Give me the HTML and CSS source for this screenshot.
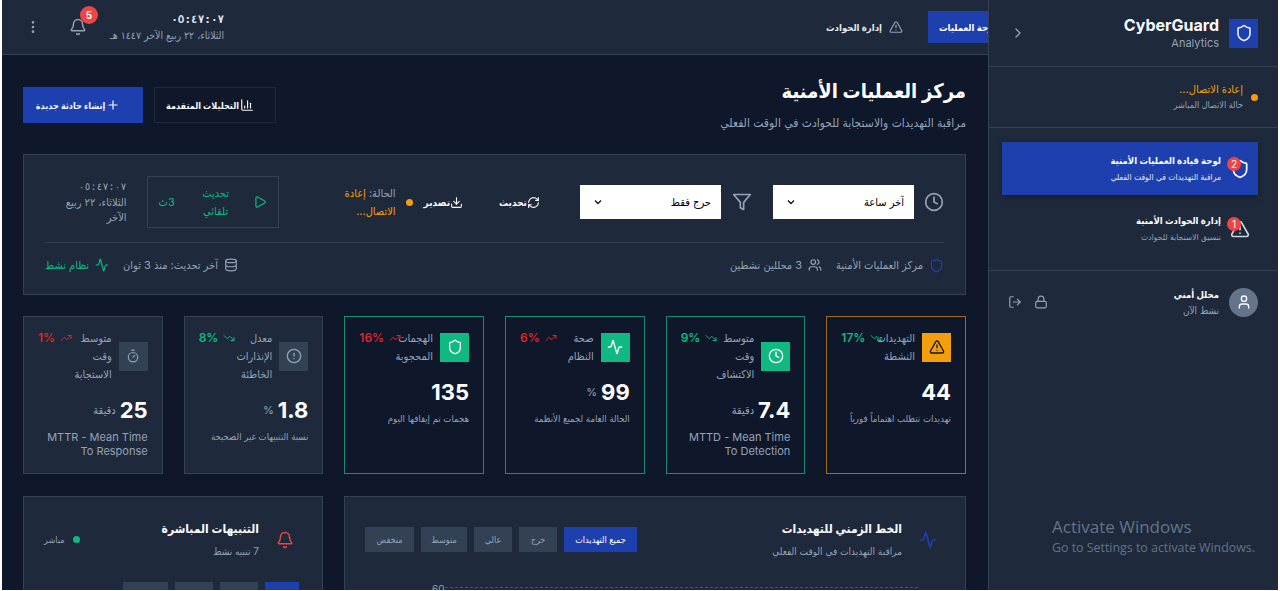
FILE: index.html
```html
<!DOCTYPE html>
<html lang="ar" dir="rtl">
<head>
    <meta charset="UTF-8">
    <meta name="viewport" content="width=device-width, initial-scale=1.0">
    <title>CyberGuard Analytics</title>
    <link rel="stylesheet" href="styles.css">
</head>
<body>
    <div id="app">
        <aside id="sidebar">
            <div class="side-head">
                <div class="logo">
                    <svg class="ico" width="18" height="18" viewBox="0 0 24 24"><path d="M20 13c0 5-3.500 7.500-7.660 8.950a1 1 0 0 1-.67-.01C7.500 20.500 4 18 4 13V6a1 1 0 0 1 1-1c2 0 4.500-1.200 6.240-2.720a1.170 1.170 0 0 1 1.520 0C14.510 3.810 17 5 19 5a1 1 0 0 1 1 1z"/></svg>
                </div>
                <div class="brand">
                    <div class="brand-name">CyberGuard</div>
                    <div class="brand-sub">Analytics</div>
                </div>
                <svg class="ico chevron" width="16" height="16" viewBox="0 0 24 24"><path d="m9 18 6-6-6-6"/></svg>
            </div>

            <div class="side-status">
                <span class="dot dot-orange"></span>
                <div>
                    <div class="status-main">إعادة الاتصال...</div>
                    <div class="status-sub">حالة الاتصال المباشر</div>
                </div>
            </div>

            <nav class="side-nav">
                <a class="side-item active">
                    <span class="side-icon">
                        <svg class="ico" width="20" height="20" viewBox="0 0 24 24"><path d="M20 13c0 5-3.500 7.500-7.660 8.950a1 1 0 0 1-.67-.01C7.500 20.500 4 18 4 13V6a1 1 0 0 1 1-1c2 0 4.500-1.200 6.240-2.720a1.170 1.170 0 0 1 1.520 0C14.510 3.810 17 5 19 5a1 1 0 0 1 1 1z"/></svg>
                        <span class="side-badge">2</span>
                    </span>
                    <span>
                        <span class="side-title">لوحة قيادة العمليات الأمنية</span>
                        <span class="side-desc">مراقبة التهديدات في الوقت الفعلي</span>
                    </span>
                </a>
                <a class="side-item">
                    <span class="side-icon">
                        <svg class="ico" width="20" height="20" viewBox="0 0 24 24"><path d="m21.730 18-8-14a2 2 0 0 0-3.480 0l-8 14A2 2 0 0 0 4 21h16a2 2 0 0 0 1.730-3"/><path d="M12 9v4"/><path d="M12 17h.01"/></svg>
                        <span class="side-badge">1</span>
                    </span>
                    <span>
                        <span class="side-title">إدارة الحوادث الأمنية</span>
                        <span class="side-desc">تنسيق الاستجابة للحوادث</span>
                    </span>
                </a>
            </nav>

            <div class="side-user">
                <div class="avatar">
                    <svg class="ico" width="16" height="16" viewBox="0 0 24 24"><path d="M19 21v-2a4 4 0 0 0-4-4H9a4 4 0 0 0-4 4v2"/><circle cx="12" cy="7" r="4"/></svg>
                </div>
                <div class="user-text">
                    <div class="user-name">محلل أمني</div>
                    <div class="user-state">نشط الآن</div>
                </div>
                <svg class="ico user-act" width="14" height="14" viewBox="0 0 24 24"><rect x="3" y="11" width="18" height="11" rx="2"/><path d="M7 11V7a5 5 0 0 1 10 0v4"/></svg>
                <svg class="ico user-act" width="14" height="14" viewBox="0 0 24 24"><path d="M9 21H5a2 2 0 0 1-2-2V5a2 2 0 0 1 2-2h4"/><path d="m16 17 5-5-5-5"/><path d="M21 12H9"/></svg>
            </div>

            <div class="watermark" dir="ltr">
                <div class="wm-title">Activate Windows</div>
                <div class="wm-sub">Go to Settings to activate Windows.</div>
            </div>
        </aside>

        <div id="main">
            <header class="topbar">
                <nav class="top-nav">
                    <a class="top-link active">لوحة العمليات</a>
                    <a class="top-link">
                        <svg class="ico" width="14" height="14" viewBox="0 0 24 24"><path d="m21.730 18-8-14a2 2 0 0 0-3.480 0l-8 14A2 2 0 0 0 4 21h16a2 2 0 0 0 1.730-3"/><path d="M12 9v4"/><path d="M12 17h.01"/></svg>
                        إدارة الحوادث
                    </a>
                </nav>
                <div class="top-tools">
                    <div class="top-clock">
                        <div class="clock-time">٠٥:٤٧:٠٧</div>
                        <div class="clock-date">الثلاثاء، ٢٢ ربيع الآخر ١٤٤٧ هـ</div>
                    </div>
                    <div class="bell">
                        <svg class="ico" width="18" height="18" viewBox="0 0 24 24"><path d="M10.268 21a2 2 0 0 0 3.464 0"/><path d="M3.262 15.326A1 1 0 0 0 4 17h16a1 1 0 0 0 .74-1.673C19.410 13.956 18 12.499 18 8A6 6 0 0 0 6 8c0 4.499-1.411 5.956-2.738 7.326"/></svg>
                        <span class="bell-badge">5</span>
                    </div>
                    <svg class="ico dots" width="16" height="16" viewBox="0 0 24 24"><circle cx="12" cy="12" r="1"/><circle cx="12" cy="5" r="1"/><circle cx="12" cy="19" r="1"/></svg>
                </div>
            </header>

            <div class="content">
                <div class="page-head">
                    <div>
                        <h1>مركز العمليات الأمنية</h1>
                        <p>مراقبة التهديدات والاستجابة للحوادث في الوقت الفعلي</p>
                    </div>
                    <div class="page-actions">
                        <button class="btn btn-ghost">
                            <svg class="ico" width="14" height="14" viewBox="0 0 24 24"><path d="M3 3v16a2 2 0 0 0 2 2h16"/><path d="M18 17V9"/><path d="M13 17V5"/><path d="M8 17v-3"/></svg>التحليلات المتقدمة
                        </button>
                        <button class="btn btn-primary">
                            <svg class="ico" width="14" height="14" viewBox="0 0 24 24"><path d="M5 12h14"/><path d="M12 5v14"/></svg>إنشاء حادثة جديدة
                        </button>
                    </div>
                </div>

                <section class="controls">
                    <div class="ctrl-row">
                        <svg class="ico ctrl-ico" width="20" height="20" viewBox="0 0 24 24"><circle cx="12" cy="12" r="10"/><path d="M12 6v6l4 2"/></svg>
                        <select class="ctrl-select"><option>آخر ساعة</option></select>
                        <svg class="ico ctrl-ico funnel" width="20" height="20" viewBox="0 0 24 24"><path d="M22 3H2l8 9.460V19l4 2v-8.540z"/></svg>
                        <select class="ctrl-select"><option>حرج فقط</option></select>
                        <button class="ctrl-btn refresh">
                            <svg class="ico" width="13" height="13" viewBox="0 0 24 24"><path d="M3 12a9 9 0 0 1 9-9 9.750 9.750 0 0 1 6.740 2.740L21 8"/><path d="M21 3v5h-5"/><path d="M21 12a9 9 0 0 1-9 9 9.750 9.750 0 0 1-6.740-2.740L3 16"/><path d="M8 16H3v5"/></svg>تحديث
                        </button>
                        <button class="ctrl-btn export">
                            <svg class="ico" width="13" height="13" viewBox="0 0 24 24"><path d="M21 15v4a2 2 0 0 1-2 2H5a2 2 0 0 1-2-2v-4"/><path d="m7 10 5 5 5-5"/><path d="M12 15V3"/></svg>تصدير
                        </button>
                        <span class="dot dot-orange ctrl-dot"></span>
                        <div class="ctrl-state"><span>الحالة:</span> إعادة الاتصال...</div>
                        <div class="auto-box">
                            <svg class="ico" width="14" height="14" viewBox="0 0 24 24"><path d="M5 5a2 2 0 0 1 3.008-1.728l11.997 6.998a2 2 0 0 1 .003 3.458l-12 7A2 2 0 0 1 5 19z"/></svg>
                            <span class="auto-label">تحديث تلقائي</span>
                            <span class="auto-count">3ث</span>
                        </div>
                        <div class="ctrl-clock">
                            <div class="clock-time">٠٥:٤٧:٠٧</div>
                            <div class="clock-date">الثلاثاء، ٢٢ ربيع الآخر</div>
                        </div>
                    </div>
                    <div class="ctrl-foot">
                        <div class="foot-group">
                            <svg class="ico foot-shield" width="15" height="15" viewBox="0 0 24 24"><path d="M20 13c0 5-3.500 7.500-7.660 8.950a1 1 0 0 1-.67-.01C7.500 20.500 4 18 4 13V6a1 1 0 0 1 1-1c2 0 4.500-1.200 6.240-2.720a1.170 1.170 0 0 1 1.520 0C14.510 3.810 17 5 19 5a1 1 0 0 1 1 1z"/></svg>
                            <span>مركز العمليات الأمنية</span>
                            <svg class="ico foot-gap" width="14" height="14" viewBox="0 0 24 24"><path d="M16 21v-2a4 4 0 0 0-4-4H6a4 4 0 0 0-4 4v2"/><circle cx="9" cy="7" r="4"/><path d="M22 21v-2a4 4 0 0 0-3-3.870"/><path d="M16 3.130a4 4 0 0 1 0 7.750"/></svg>
                            <span>3 محللين نشطين</span>
                        </div>
                        <div class="foot-group">
                            <svg class="ico" width="14" height="14" viewBox="0 0 24 24"><ellipse cx="12" cy="5" rx="9" ry="3"/><path d="M3 5v14a9 3 0 0 0 18 0V5"/><path d="M3 12a9 3 0 0 0 18 0"/></svg>
                            <span>آخر تحديث: منذ 3 ثوان</span>
                            <svg class="ico foot-gap green" width="14" height="14" viewBox="0 0 24 24"><path d="M22 12h-2.480a2 2 0 0 0-1.930 1.460l-2.350 8.360a.25.25 0 0 1-.48 0L9.240 2.180a.25.25 0 0 0-.48 0l-2.350 8.360A2 2 0 0 1 4.490 12H2"/></svg>
                            <span class="green">نظام نشط</span>
                        </div>
                    </div>
                </section>

                <section class="kpis">
                    <div class="kpi kpi-orange">
                        <div class="kpi-head">
                            <span class="kpi-ico bg-orange"><svg class="ico" width="16" height="16" viewBox="0 0 24 24"><path d="m21.730 18-8-14a2 2 0 0 0-3.480 0l-8 14A2 2 0 0 0 4 21h16a2 2 0 0 0 1.730-3"/><path d="M12 9v4"/><path d="M12 17h.01"/></svg></span>
                            <span class="kpi-title">التهديدات<br>النشطة</span>
                            <span class="trend down"><svg class="ico" width="12" height="12" viewBox="0 0 24 24"><path d="M22 17 13.500 8.500l-5 5L2 7"/><path d="M16 17h6v-6"/></svg>17%</span>
                        </div>
                        <div class="kpi-val"><b>44</b></div>
                        <div class="kpi-desc">تهديدات تتطلب اهتماماً فورياً</div>
                    </div>
                    <div class="kpi kpi-green">
                        <div class="kpi-head">
                            <span class="kpi-ico bg-green"><svg class="ico" width="16" height="16" viewBox="0 0 24 24"><circle cx="12" cy="12" r="10"/><path d="M12 6v6l4 2"/></svg></span>
                            <span class="kpi-title">متوسط<br>وقت<br>الاكتشاف</span>
                            <span class="trend down"><svg class="ico" width="12" height="12" viewBox="0 0 24 24"><path d="M22 17 13.500 8.500l-5 5L2 7"/><path d="M16 17h6v-6"/></svg>9%</span>
                        </div>
                        <div class="kpi-val"><b>7.4</b><span>دقيقة</span></div>
                        <div class="kpi-note">MTTD - Mean Time To Detection</div>
                    </div>
                    <div class="kpi kpi-green">
                        <div class="kpi-head">
                            <span class="kpi-ico bg-green"><svg class="ico" width="16" height="16" viewBox="0 0 24 24"><path d="M22 12h-2.480a2 2 0 0 0-1.930 1.460l-2.350 8.360a.25.25 0 0 1-.48 0L9.240 2.180a.25.25 0 0 0-.48 0l-2.350 8.360A2 2 0 0 1 4.490 12H2"/></svg></span>
                            <span class="kpi-title">صحة<br>النظام</span>
                            <span class="trend up"><svg class="ico" width="12" height="12" viewBox="0 0 24 24"><path d="M22 7 13.500 15.500l-5-5L2 17"/><path d="M16 7h6v6"/></svg>6%</span>
                        </div>
                        <div class="kpi-val"><b>99</b><span>%</span></div>
                        <div class="kpi-desc">الحالة العامة لجميع الأنظمة</div>
                    </div>
                    <div class="kpi kpi-green">
                        <div class="kpi-head">
                            <span class="kpi-ico bg-green"><svg class="ico" width="16" height="16" viewBox="0 0 24 24"><path d="M20 13c0 5-3.500 7.500-7.660 8.950a1 1 0 0 1-.67-.01C7.500 20.500 4 18 4 13V6a1 1 0 0 1 1-1c2 0 4.500-1.200 6.240-2.720a1.170 1.170 0 0 1 1.520 0C14.510 3.810 17 5 19 5a1 1 0 0 1 1 1z"/></svg></span>
                            <span class="kpi-title">الهجمات<br>المحجوبة</span>
                            <span class="trend up"><svg class="ico" width="12" height="12" viewBox="0 0 24 24"><path d="M22 7 13.500 15.500l-5-5L2 17"/><path d="M16 7h6v6"/></svg>16%</span>
                        </div>
                        <div class="kpi-val"><b>135</b></div>
                        <div class="kpi-desc">هجمات تم إيقافها اليوم</div>
                    </div>
                    <div class="kpi kpi-plain">
                        <div class="kpi-head">
                            <span class="kpi-ico bg-slate"><svg class="ico" width="16" height="16" viewBox="0 0 24 24"><circle cx="12" cy="12" r="10"/><path d="M12 8v4"/><path d="M12 16h.01"/></svg></span>
                            <span class="kpi-title">معدل<br>الإنذارات<br>الخاطئة</span>
                            <span class="trend down"><svg class="ico" width="12" height="12" viewBox="0 0 24 24"><path d="M22 17 13.500 8.500l-5 5L2 7"/><path d="M16 17h6v-6"/></svg>8%</span>
                        </div>
                        <div class="kpi-val"><b>1.8</b><span>%</span></div>
                        <div class="kpi-desc">نسبة التنبيهات غير الصحيحة</div>
                    </div>
                    <div class="kpi kpi-plain">
                        <div class="kpi-head">
                            <span class="kpi-ico bg-slate"><svg class="ico" width="14" height="14" viewBox="0 0 24 24"><path d="M10 2h4"/><path d="M12 14l3-3"/><circle cx="12" cy="14" r="8"/></svg></span>
                            <span class="kpi-title">متوسط<br>وقت<br>الاستجابة</span>
                            <span class="trend up"><svg class="ico" width="12" height="12" viewBox="0 0 24 24"><path d="M22 7 13.500 15.500l-5-5L2 17"/><path d="M16 7h6v6"/></svg>1%</span>
                        </div>
                        <div class="kpi-val"><b>25</b><span>دقيقة</span></div>
                        <div class="kpi-note">MTTR - Mean Time To Response</div>
                    </div>
                </section>

                <section class="panels">
                    <div class="panel panel-wide">
                        <div class="panel-head">
                            <svg class="ico panel-ico blue" width="18" height="18" viewBox="0 0 24 24"><path d="M22 12h-2.480a2 2 0 0 0-1.930 1.460l-2.350 8.360a.25.25 0 0 1-.48 0L9.240 2.180a.25.25 0 0 0-.48 0l-2.350 8.360A2 2 0 0 1 4.490 12H2"/></svg>
                            <div class="panel-text">
                                <h2>الخط الزمني للتهديدات</h2>
                                <p>مراقبة التهديدات في الوقت الفعلي</p>
                            </div>
                            <div class="chips">
                                <span class="chip on">جميع التهديدات</span>
                                <span class="chip w38">حرج</span>
                                <span class="chip w38">عالي</span>
                                <span class="chip w45">متوسط</span>
                                <span class="chip w49">منخفض</span>
                            </div>
                        </div>
                        <div class="chart-line"><em>60</em></div>
                    </div>
                    <div class="panel">
                        <div class="panel-head">
                            <svg class="ico panel-ico red" width="18" height="18" viewBox="0 0 24 24"><path d="M10.268 21a2 2 0 0 0 3.464 0"/><path d="M3.262 15.326A1 1 0 0 0 4 17h16a1 1 0 0 0 .74-1.673C19.410 13.956 18 12.499 18 8A6 6 0 0 0 6 8c0 4.499-1.411 5.956-2.738 7.326"/></svg>
                            <div class="panel-text">
                                <h2>التنبيهات المباشرة</h2>
                                <p>7 تنبيه نشط</p>
                            </div>
                            <div class="live"><span class="dot dot-green"></span>مباشر</div>
                        </div>
                        <div class="alert-tabs">
                            <span class="tab on"></span>
                            <span class="tab t38"></span>
                            <span class="tab t38"></span>
                            <span class="tab t45"></span>
                        </div>
                    </div>
                </section>
            </div>
        </div>
    </div>
</body>
</html>
```

FILE: styles.css
```css
* {
    box-sizing: border-box;
}

html, body {
    height: 100%;
}

body {
    margin: 0;
    padding: 0 2px 1px 2px;
    background-color: #fff;
    font-family: Inter, "DejaVu Sans Condensed", "DejaVu Sans", sans-serif;
    color: #f8fafc;
    overflow: hidden;
}

h1, h2, p {
    margin: 0;
}

.ico {
    fill: none;
    stroke: currentColor;
    stroke-width: 2;
    stroke-linecap: round;
    stroke-linejoin: round;
    flex: none;
}

.dot {
    display: inline-block;
    width: 7px;
    height: 7px;
    border-radius: 50%;
    flex: none;
}

.dot-orange { background-color: #f59e0b; }
.dot-green { background-color: #10b981; }
.green { color: #10b981; }
.blue { color: #1e40af; }
.red { color: #ef4444; }

#app {
    display: flex;
    height: 100%;
    overflow: hidden;
}

/* sidebar */
#sidebar {
    width: 290px;
    flex: none;
    position: relative;
    z-index: 5;
    background-color: #1e293b;
    border-left: 1px solid #334155;
    display: flex;
    flex-direction: column;
}

.side-head {
    height: 67px;
    flex: none;
    display: flex;
    align-items: center;
    padding: 0 20px 0 20px;
    gap: 10px;
    border-bottom: 1px solid #334155;
}

.logo {
    width: 29px;
    height: 29px;
    background-color: #1e40af;
    display: flex;
    align-items: center;
    justify-content: center;
}

.brand {
    flex: 1;
}

.brand-name {
    font-size: 16px;
    font-weight: 700;
    line-height: 20px;
}

.brand-sub {
    font-size: 11px;
    line-height: 17px;
    color: #94a3b8;
}

.chevron {
    color: #94a3b8;
    margin-left: 1px;
}

.side-status {
    height: 61px;
    flex: none;
    display: flex;
    align-items: center;
    gap: 8px;
    padding: 0 20px;
    border-bottom: 1px solid #334155;
}

.status-main {
    font-size: 11px;
    line-height: 16px;
    color: #f59e0b;
}

.status-sub {
    font-size: 9px;
    line-height: 16px;
    color: #94a3b8;
}

.side-nav {
    padding: 14px 20px 0 13px;
    display: flex;
    flex-direction: column;
    gap: 7px;
    height: 143px;
    flex: none;
    border-bottom: 1px solid #334155;
}

.side-item {
    height: 53px;
    display: flex;
    align-items: center;
    gap: 9px;
    padding: 0 8px;
    color: #cbd5e1;
}

.side-item.active {
    background-color: #1e40af;
    color: #fff;
    box-shadow: 0 2px 6px rgba(0, 0, 0, 0.3);
}

.side-icon {
    position: relative;
    width: 20px;
    height: 20px;
    display: block;
    flex: none;
}

.side-badge {
    position: absolute;
    top: -2px;
    right: 9px;
    width: 14px;
    height: 14px;
    border-radius: 50%;
    background-color: #ef4444;
    color: #fff;
    font-size: 10px;
    line-height: 14px;
    text-align: center;
}

.side-title {
    display: block;
    font-size: 9.500px;
    font-weight: 700;
    line-height: 17px;
    color: #f8fafc;
}

.side-desc {
    display: block;
    font-size: 8.500px;
    line-height: 16px;
    color: #94a3b8;
}

.active .side-desc {
    color: #e2e8f0;
}

.side-user {
    display: flex;
    align-items: center;
    padding: 16px 20px 0 20px;
    gap: 10px;
    color: #94a3b8;
}

.avatar {
    width: 29px;
    height: 29px;
    border-radius: 50%;
    background-color: #64748b;
    color: #f8fafc;
    display: flex;
    align-items: center;
    justify-content: center;
    flex: none;
}

.user-text {
    flex: 1;
}

.user-name {
    font-size: 9.500px;
    font-weight: 700;
    line-height: 16px;
    color: #f8fafc;
}

.user-state {
    font-size: 10px;
    line-height: 14px;
    color: #94a3b8;
}

.user-act {
    margin-right: 2px;
}

.user-act + .user-act {
    margin-right: 2px;
    margin-left: -1px;
}

.watermark {
    position: absolute;
    top: 516px;
    left: 63px;
    color: #64748b;
    font-family: "Open Sans", sans-serif;
    white-space: nowrap;
}

.wm-title {
    font-size: 17px;
    line-height: 22px;
}

.wm-sub {
    font-size: 12.400px;
    line-height: 20px;
}

/* main area */
#main {
    flex: 1;
    min-width: 0;
    background-color: #0f172a;
    overflow: hidden;
    display: flex;
    flex-direction: column;
}

.topbar {
    height: 55px;
    flex: none;
    display: flex;
    justify-content: space-between;
    align-items: center;
    background-color: #1e293b;
    border-bottom: 1px solid #334155;
    padding-left: 23px;
}

.top-nav {
    display: flex;
    align-items: center;
    gap: 25px;
    margin-right: -28px;
}

.top-link {
    display: flex;
    align-items: center;
    gap: 7px;
    font-size: 9.500px;
    font-weight: 700;
    color: #e2e8f0;
    white-space: nowrap;
}

.top-link .ico {
    color: #94a3b8;
}

.top-link.active {
    width: 88px;
    height: 32px;
    justify-content: flex-end;
    padding-left: 11px;
    background-color: #1e40af;
    color: #fff;
}

.top-tools {
    display: flex;
    align-items: center;
    gap: 20px;
}

.clock-time {
    font-family: "DejaVu Sans Mono", monospace;
    font-size: 11px;
    font-weight: 700;
    line-height: 16px;
    letter-spacing: 1.500px;
    color: #e2e8f0;
}

.clock-date {
    font-size: 10.500px;
    line-height: 15px;
    color: #94a3b8;
}

.bell {
    position: relative;
    width: 18px;
    height: 18px;
    margin-left: 8px;
    margin-right: 3px;
    color: #94a3b8;
}

.bell-badge {
    position: absolute;
    top: -12px;
    left: 11px;
    width: 18px;
    height: 18px;
    border-radius: 50%;
    background-color: #ef4444;
    color: #fff;
    font-size: 10px;
    font-weight: 700;
    line-height: 18px;
    text-align: center;
}

.dots {
    color: #94a3b8;
}

.content {
    padding: 0 22px 0 21px;
}

.page-head {
    height: 99px;
    display: flex;
    justify-content: space-between;
    align-items: flex-start;
    padding-top: 22px;
}

h1 {
    font-size: 20px;
    font-weight: 700;
    line-height: 28px;
    color: #fff;
}

.page-head p {
    font-size: 12px;
    line-height: 20px;
    margin-top: 8px;
    color: #94a3b8;
}

.page-actions {
    display: flex;
    gap: 11px;
    margin-top: 10px;
}

.btn {
    height: 36px;
    display: flex;
    align-items: center;
    justify-content: center;
    gap: 1px;
    font-family: inherit;
    font-size: 9px;
    font-weight: 700;
    color: #f8fafc;
    border: none;
    padding: 0 10px 0 0;
}

.btn-ghost {
    width: 122px;
    background: transparent;
    border: 1px solid #1e293b;
}

.btn-primary {
    width: 120px;
    background-color: #1e40af;
}

/* filter bar */
.controls {
    height: 141px;
    padding: 21px 21px 0 21px;
    background-color: #1e293b;
    border: 1px solid #334155;
}

.ctrl-row {
    height: 52px;
    display: flex;
    align-items: center;
    border-bottom: none;
}

.ctrl-ico {
    color: #94a3b8;
    margin-left: 10px;
}

.ctrl-select {
    width: 141px;
    height: 34px;
    border: none;
    appearance: none;
    background: #fff url("data:image/svg+xml,%3Csvg xmlns='http://www.w3.org/2000/svg' viewBox='0 0 24 24' fill='none' stroke='%23111' stroke-width='2.500'%3E%3Cpath d='m6 9 6 6 6-6'/%3E%3C/svg%3E") no-repeat 12px center / 12px 12px;
    color: #000;
    border-radius: 0;
    font-family: inherit;
    font-size: 11px;
    padding: 0 10px;
    margin-left: 21px;
}

.funnel {
    margin-left: 11px;
}

.ctrl-btn {
    display: flex;
    align-items: center;
    background: transparent;
    border: none;
    padding: 0;
    font-family: inherit;
    font-size: 10px;
    font-weight: 700;
    color: #f8fafc;
}

.refresh {
    margin-right: 19px;
}

.export {
    margin-right: 36px;
}

.ctrl-dot {
    margin-right: 11px;
}

.ctrl-state {
    width: 60px;
    margin-right: 10px;
    font-size: 11px;
    line-height: 18px;
    color: #f59e0b;
}

.ctrl-state span {
    color: #94a3b8;
}

.auto-box {
    width: 132px;
    height: 52px;
    margin-right: 57px;
    flex: none;
    display: flex;
    align-items: center;
    padding: 0 11px;
    border: 1px solid #334155;
    color: #10b981;
}

.auto-label {
    width: 52px;
    margin-right: 11px;
    text-align: center;
    font-size: 11px;
    line-height: 18px;
}

.auto-count {
    margin-right: auto;
    font-size: 11px;
}

.ctrl-clock {
    width: 72px;
    margin-right: 20px;
    flex: none;
}

.ctrl-clock .clock-time {
    font-size: 10px;
    color: #94a3b8;
    font-weight: 400;
    letter-spacing: 2px;
}

.ctrl-clock .clock-date {
    font-size: 11px;
    color: #94a3b8;
}

.ctrl-foot {
    margin-top: 14px;
    padding-top: 12px;
    border-top: 1px solid #334155;
    display: flex;
    justify-content: space-between;
    font-size: 11px;
    color: #94a3b8;
}

.foot-group {
    display: flex;
    align-items: center;
    gap: 6px;
    line-height: 20px;
}

.foot-shield {
    color: #1e40af;
}

.foot-gap {
    margin-right: 8px;
}

/* kpi cards */
.kpis {
    display: grid;
    grid-template-columns: repeat(6, 1fr);
    gap: 21px;
    margin-top: 21px;
}

.kpi {
    height: 158px;
    border: 1px solid #334155;
    padding: 12px 14px 0 14px;
}

.kpi-orange { border-color: #a16b1b; }
.kpi-green { border-color: #1a8a72; }
.kpi-plain { background-color: #1e293b; }

.kpi-head {
    display: flex;
    align-items: center;
    gap: 7px;
    position: relative;
}

.kpi-ico {
    width: 29px;
    height: 29px;
    display: flex;
    align-items: center;
    justify-content: center;
    flex: none;
    color: #fff;
}

.bg-orange { background-color: #f59e0b; color: #0f172a; }
.bg-green { background-color: #10b981; }
.bg-slate { background-color: #334155; color: #94a3b8; }

.kpi-title {
    font-size: 11px;
    line-height: 18px;
    color: #94a3b8;
}

.trend {
    position: absolute;
    top: 0;
    left: 0;
    display: flex;
    align-items: center;
    gap: 5px;
    font-size: 12px;
    font-weight: 600;
    line-height: 18px;
}

.trend.up { color: #dc2626; }
.trend.down { color: #10b981; }

.kpi-val {
    margin-top: 12px;
    display: flex;
    align-items: center;
    gap: 4px;
    height: 30px;
    font-size: 11px;
    color: #94a3b8;
}

.kpi-val b {
    font-size: 22px;
    font-weight: 700;
    color: #fff;
}

.kpi-desc {
    margin-top: 4px;
    font-size: 9.500px;
    line-height: 15px;
    color: #94a3b8;
}

.kpi-note {
    margin-top: 5px;
    font-size: 11px;
    line-height: 14px;
    color: #94a3b8;
}

/* lower panels */
.panels {
    display: grid;
    grid-template-columns: 300px 1fr;
    direction: ltr;
    gap: 21px;
    margin-top: 22px;
}

.panel {
    direction: rtl;
    height: 110px;
    background-color: #1e293b;
    border: 1px solid #334155;
    padding: 20px 28px 0 20px;
}

.panel-wide {
    grid-column: 2;
    grid-row: 1;
}

.panel-head {
    display: flex;
    align-items: center;
    gap: 17px;
    height: 45px;
}

.panel-ico {
    flex: none;
}

.panel-text {
    flex: 1;
}

h2 {
    font-size: 12px;
    font-weight: 700;
    line-height: 22px;
    color: #f8fafc;
}

.panel-text p {
    font-size: 10px;
    line-height: 22px;
    color: #94a3b8;
}

.chips {
    display: flex;
    gap: 7px;
}

.chip {
    height: 25px;
    display: flex;
    align-items: center;
    justify-content: center;
    background-color: #334155;
    color: #94a3b8;
    font-size: 9px;
}

.chip.on {
    width: 73px;
    background-color: #1e40af;
    color: #fff;
}

.w38 { width: 38px; }
.w45 { width: 46px; }
.w49 { width: 49px; }

.live {
    display: flex;
    align-items: center;
    gap: 8px;
    font-size: 9px;
    color: #94a3b8;
}

.chart-line {
    position: relative;
    margin-top: 25px;
    margin-right: 19px;
    margin-left: 80px;
    border-top: 1px dashed #475569;
}

.chart-line em {
    position: absolute;
    left: -13px;
    top: -5px;
    font-style: normal;
    font-size: 10px;
    line-height: 12px;
    color: #94a3b8;
}

.alert-tabs {
    display: flex;
    gap: 7px;
    margin-top: 20px;
    margin-right: -5px;
}

.tab {
    width: 34px;
    height: 20px;
    background-color: #334155;
}

.tab.on {
    background-color: #1e40af;
}

.t38 { width: 38px; }
.t45 { width: 45px; }
```
